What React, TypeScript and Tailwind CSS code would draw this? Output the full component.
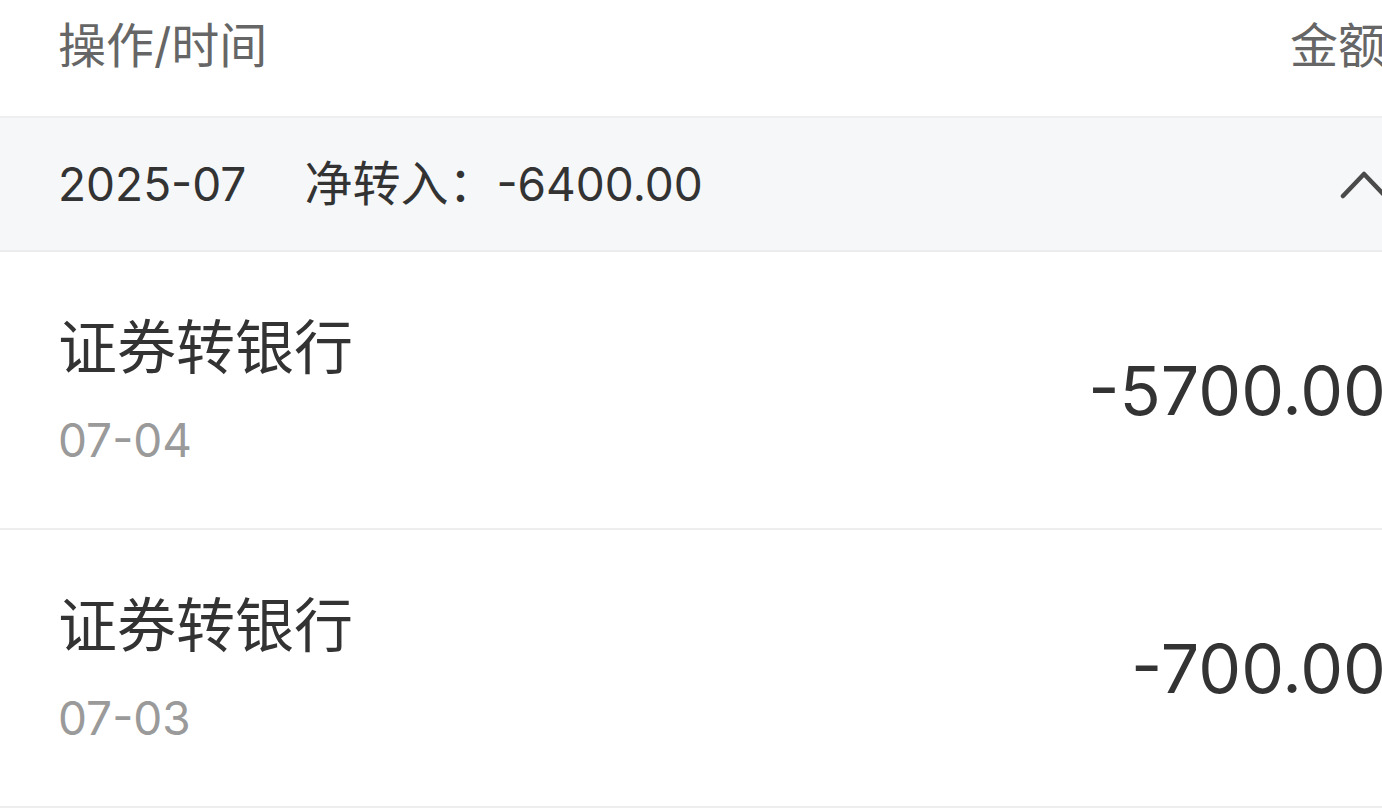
import { FC } from "react"

const font = { fontFamily: 'Inter, "Noto Sans CJK SC", sans-serif' }

interface RowProps {
  title: string
  date: string
  amount: string
}

const Row: FC<RowProps> = ({ title, date, amount }) => (
  <div className="flex h-[278px] items-center justify-between border-b-2 border-[#eeeeee] pl-[58px] pr-[54px]">
    <div className="flex flex-col">
      <div className="text-[59px] leading-[60px] text-[#333333]">{title}</div>
      <div className="mt-[39px] text-[46px] leading-[46px] text-[#9a9a9a]">{date}</div>
    </div>
    <div className="text-[68px] leading-[72px] text-[#333333]">{amount}</div>
  </div>
)

const App: FC = () => {
  return (
    <div className="h-[809px] w-[1382px] overflow-hidden bg-white" style={font}>
      <div className="w-[1440px]">
        <div className="flex h-[118px] items-center justify-between border-b-2 border-[#eeeff1] pb-[24px] pl-[58px] pr-[54px] text-[48px] text-[#666666]">
          <span>操作/时间</span>
          <span>金额</span>
        </div>
        <div className="flex h-[134px] items-center justify-between border-b-2 border-[#ebecee] bg-[#f6f7f9] pl-[58px] pr-[52px] text-[46px] text-[#333333]">
          <div className="flex items-baseline">
            <span>2025-07</span>
            <span className="ml-[58px] text-[48px]">净转入：</span>
            <span>-6400.00</span>
          </div>
          <svg width="48" height="32" viewBox="0 0 48 32" fill="none">
            <polyline points="3,28 24,6 45,28" stroke="#4a4a4a" strokeWidth="4.5" strokeLinecap="round" strokeLinejoin="round" />
          </svg>
        </div>
        <Row title="证券转银行" date="07-04" amount="-5700.00" />
        <Row title="证券转银行" date="07-03" amount="-700.00" />
      </div>
    </div>
  )
}

export default App
